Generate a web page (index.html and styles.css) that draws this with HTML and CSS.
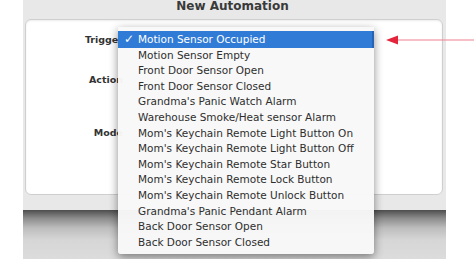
FILE: index.html
```html
<!DOCTYPE html>
<html>
    <head>
      <meta charset="utf-8">
      <title>New Automation</title>
      <link rel="stylesheet" href="styles.css">
    </head>
    <body>
        <div class="window">
            <div class="title">New Automation</div>
            <div class="sheet">
                <div class="field field-trigger">Trigger</div>
                <div class="field field-action">Action</div>
                <div class="field field-mode">Mode</div>
            </div>
            <div class="gap"></div>
            <div class="toolbar"></div>
        </div>

        <!-- popup menu over the trigger select -->
        <ul class="menu">
            <li class="item chosen"><span class="check">&#10003;</span>Motion Sensor Occupied</li>
            <li class="item">Motion Sensor Empty</li>
            <li class="item">Front Door Sensor Open</li>
            <li class="item">Front Door Sensor Closed</li>
            <li class="item">Grandma's Panic Watch Alarm</li>
            <li class="item">Warehouse Smoke/Heat sensor Alarm</li>
            <li class="item">Mom's Keychain Remote Light Button On</li>
            <li class="item">Mom's Keychain Remote Light Button Off</li>
            <li class="item">Mom's Keychain Remote Star Button</li>
            <li class="item">Mom's Keychain Remote Lock Button</li>
            <li class="item">Mom's Keychain Remote Unlock Button</li>
            <li class="item">Grandma's Panic Pendant Alarm</li>
            <li class="item">Back Door Sensor Open</li>
            <li class="item">Back Door Sensor Closed</li>
        </ul>

        <!-- red callout arrow -->
        <svg class="pointer" width="90" height="12" viewBox="0 0 90 12">
            <line x1="10" y1="6" x2="90" y2="6" stroke="#f0808e" stroke-width="1.2"/>
            <polygon points="0,6 12,1.5 12,10.5" fill="#e3243b"/>
        </svg>
    </body>
</html>
```

FILE: styles.css
```css
html,body{
    margin: 0;
    padding: 0;
    background: #fff;
    font-family: "DejaVu Sans", "Liberation Sans", sans-serif;
}
.window{
    width: 423px;
    height: 259px;
    margin-left: 23px;
    background: #e8e8e8;
    display: flex;
    flex-direction: column;
    overflow: hidden;
}
.title{
    height: 19px;
    line-height: 13px;
    text-align: center;
    font-size: 12px;
    font-weight: bold;
    color: #3a3a3a;
    padding-right: 4px;
}
.sheet{
    margin: 0 3px 0 2px;
    height: 174px;
    background: #fff;
    border: 1px solid #cfcfcf;
    border-radius: 6px;
    display: flex;
    flex-direction: column;
    box-shadow: inset 0 1px 2px rgba(0,0,0,0.08);
}
.field{
    width: 97px;
    text-align: right;
    font-size: 9.5px;
    font-weight: bold;
    color: #333;
}
.field-trigger{
    margin-top: 14px;
}
.field-action{
    margin-top: 29px;
}
.field-mode{
    margin-top: 42px;
}
.gap{
    height: 15px;
}
.toolbar{
    flex: 1;
    background: linear-gradient(#4d4d4d 0px, #8a8a8a 8px, #bdbdbd 18px, #d6d6d6 30px, #dcdcdc 49px);
}
.menu{
    position: absolute;
    left: 118px;
    top: 27px;
    width: 256px;
    margin: 0;
    padding: 5px 0 4px;
    list-style: none;
    background: rgba(248,248,248,0.97);
    box-shadow: 0 3px 10px rgba(0,0,0,0.45);
    border-radius: 0 0 3px 3px;
}
.item{
    position: relative;
    height: 15.6px;
    line-height: 15.6px;
    padding-left: 20px;
    font-size: 10.5px;
    color: #2e2e2e;
    white-space: nowrap;
}
.item.chosen{
    background: #2f7bd6;
    color: #fff;
    height: 16.6px;
    line-height: 16.6px;
    margin-top: -1px;
    border-right: 2px solid #2563b5;
}
.check{
    position: absolute;
    left: 6px;
    font-size: 12px;
}
.pointer{
    position: absolute;
    left: 386px;
    top: 34px;
}
```
